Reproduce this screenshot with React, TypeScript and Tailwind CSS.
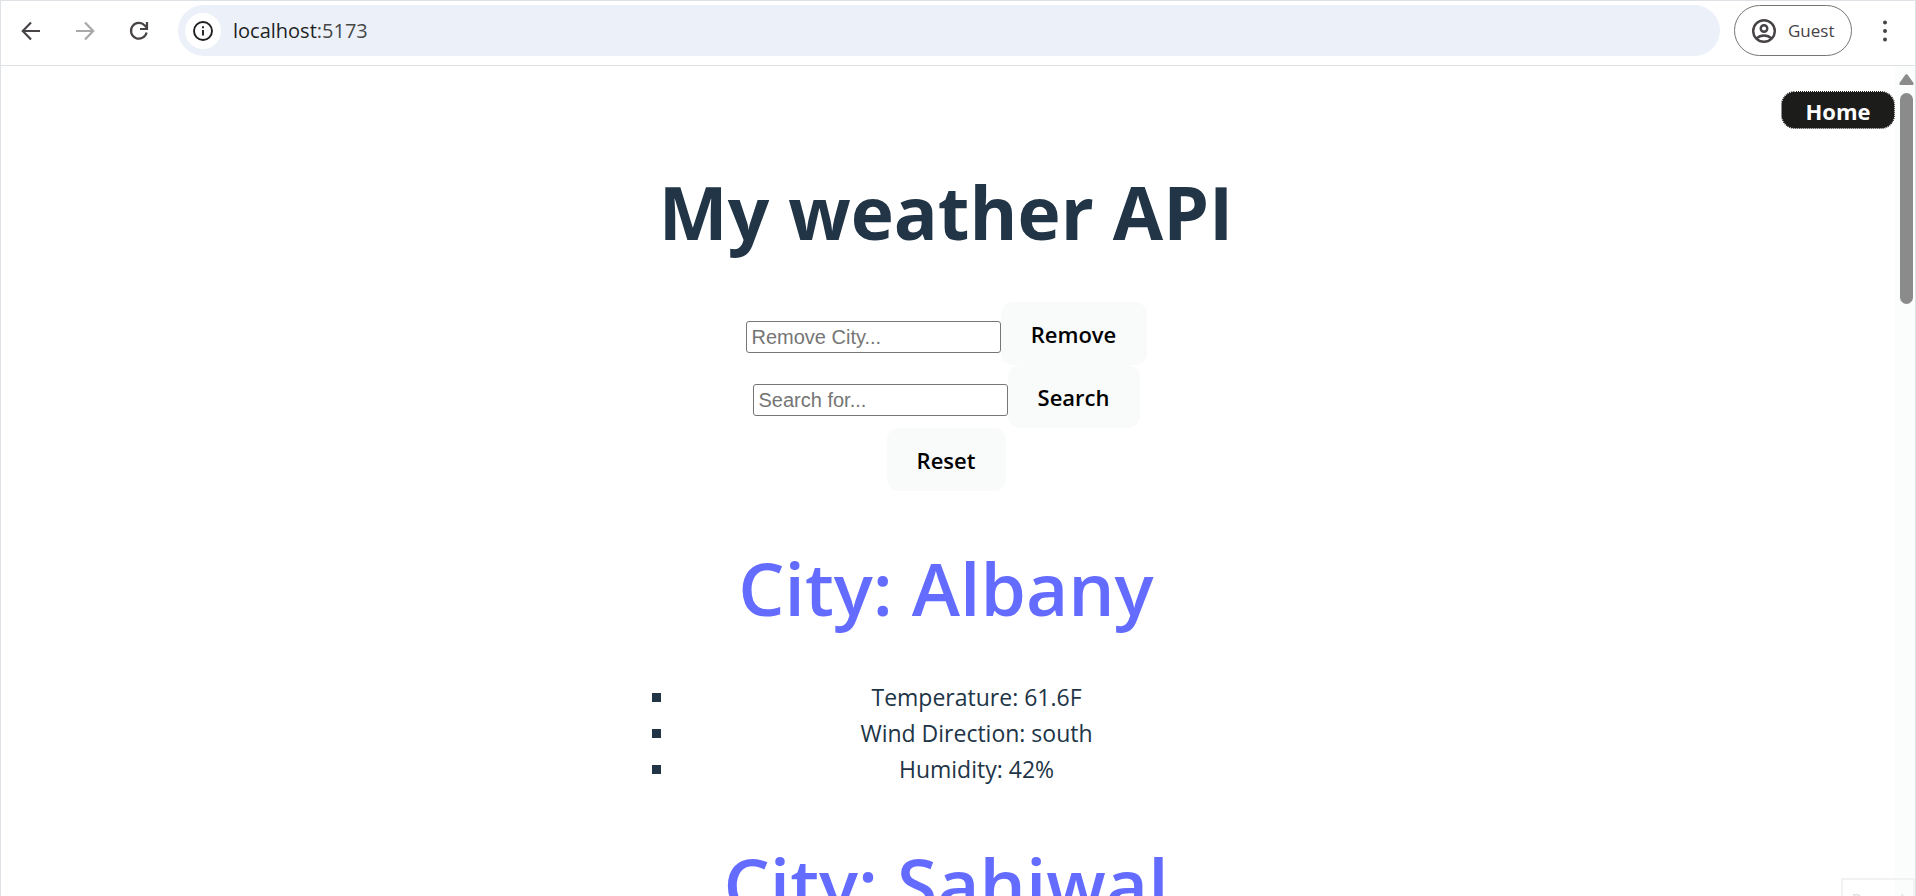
import { useState } from "react";

type City = { name: string; temperature: string; wind: string; humidity: string };

const cities: City[] = [
  { name: "Albany", temperature: "61.6F", wind: "south", humidity: "42%" },
  { name: "Sahiwal", temperature: "88.2F", wind: "north", humidity: "35%" },
];

const actionClass =
  "h-[63px] rounded-xl bg-[#f9fafa] font-['Open_Sans',sans-serif] text-[22px] font-semibold leading-9 text-black";
const inputClass =
  "mb-3 h-8 w-[255px] rounded-[3px] border border-[#767676] bg-white px-[5px] font-['Liberation_Sans',sans-serif] text-[20px] leading-6 text-black placeholder:text-[#757575]";

function BrowserBar() {
  return (
    <header className="flex h-[65px] shrink-0 items-start border-b border-[#dee1e6] bg-white pt-1 pr-[22px] pl-4">
      <nav className="flex h-[51px] items-center gap-[26px]" aria-label="Browser">
        <button type="button" aria-label="Back" className="flex size-7 items-center justify-center">
          <svg viewBox="0 0 20 20" className="size-5" fill="none" stroke="#474347" strokeWidth="2.2">
            <path d="M19 10H2.5M10 1.5 1.8 10l8.2 8.5" />
          </svg>
        </button>
        <button type="button" aria-label="Forward" className="flex size-7 items-center justify-center">
          <svg viewBox="0 0 20 20" className="size-5" fill="none" stroke="#a9a7a9" strokeWidth="2.2">
            <path d="M1 10h16.5M10 1.5 18.2 10 10 18.5" />
          </svg>
        </button>
        <button type="button" aria-label="Reload" className="flex size-7 items-center justify-center">
          <svg viewBox="0 0 20 20" className="size-5" fill="none" stroke="#474347" strokeWidth="2.2">
            <path d="M17.6 11.5A7.9 7.9 0 1 1 15.8 4.5L18 7M18 1v7h-7" />
          </svg>
        </button>
      </nav>
      <div className="ml-[25px] flex h-[51px] min-w-0 flex-1 items-center rounded-full bg-[#ecf1f9] pl-[7px]">
        <button
          type="button"
          aria-label="Site information"
          className="flex size-9 shrink-0 items-center justify-center rounded-full bg-white"
        >
          <svg viewBox="0 0 20 20" className="size-5" fill="none" stroke="#1f1f1f" strokeWidth="1.9">
            <circle cx="10" cy="10" r="9" />
            <path d="M10 9v5.5M10 5.2v2" />
          </svg>
        </button>
        <p className="pl-3 font-['Open_Sans',sans-serif] text-[20px] leading-7 text-[#1f1f1f]">
          localhost<span className="text-[#474747]">:5173</span>
        </p>
      </div>
      <button
        type="button"
        className="ml-[14px] flex h-[51px] w-[118px] shrink-0 items-center gap-3 rounded-full border border-[#757575] pl-[17px] font-['Open_Sans',sans-serif] text-[17px] leading-6 text-[#474347]"
      >
        <svg viewBox="0 0 24 24" className="size-6" fill="none" stroke="#474347" strokeWidth="2.4">
          <circle cx="12" cy="12" r="10.8" />
          <circle cx="12" cy="9.5" r="3.3" />
          <path d="M4.5 19.5c4-4 11-4 15 0" />
        </svg>
        Guest
      </button>
      <button type="button" aria-label="Menu" className="ml-[25px] flex h-[51px] w-4 items-center justify-center">
        <svg viewBox="0 0 4 22" className="h-[22px] w-1" fill="#474347">
          <circle cx="2" cy="2.5" r="2" />
          <circle cx="2" cy="11" r="2" />
          <circle cx="2" cy="19.5" r="2" />
        </svg>
      </button>
    </header>
  );
}

function CityCard({ city }: { city: City }) {
  const facts = [
    `Temperature: ${city.temperature}`,
    `Wind Direction: ${city.wind}`,
    `Humidity: ${city.humidity}`,
  ];
  return (
    <section className="flex flex-col gap-[52px] pt-[58px]">
      <h2 className="text-center text-[73px] font-semibold leading-[78px] text-[#646cff]">City: {city.name}</h2>
      <ul className="pl-9">
        {facts.map((fact) => (
          <li
            key={fact}
            className="flex items-center gap-4 text-[23px] leading-9 before:size-[9px] before:bg-[#213547]"
          >
            <span className="flex-1 text-center">{fact}</span>
          </li>
        ))}
      </ul>
    </section>
  );
}

function ScrollTrack() {
  return (
    <div className="flex w-5 shrink-0 flex-col items-center bg-[#fbfdfc] pt-2 pl-[3px]" aria-hidden="true">
      <svg viewBox="0 0 15 11" className="h-[11px] w-[15px]" fill="#8b8b8b">
        <path d="M6.3.8Q7.5-.5 8.7.8L14.5 9Q15 11 13.5 11h-12Q0 11 .5 9Z" />
      </svg>
      <div className="mt-2 h-[211px] w-[13px] rounded-full bg-[#8b8b8b]" />
    </div>
  );
}

export default function App() {
  const [removeCity, setRemoveCity] = useState("");
  const [search, setSearch] = useState("");
  return (
    <div className="relative flex h-screen flex-col overflow-hidden border-x border-t border-[#dee1e6] bg-white font-['Open_Sans',sans-serif] text-[#213547]">
      <BrowserBar />
      <div className="flex min-h-0 flex-1 overflow-hidden">
        <main className="flex min-w-0 flex-1 flex-col">
          <nav className="flex w-full justify-end pt-[25px]">
            <a
              href="#home"
              className="flex h-[38px] w-[114px] items-center justify-center rounded-[14px] border border-dotted border-white bg-[#1c1c1a] pt-0.5 text-[22px] font-bold leading-8 text-white"
            >
              Home
            </a>
          </nav>
          <div className="flex flex-col items-center pr-1">
            <h1 className="mt-[41px] text-center text-[73px] font-bold leading-[84px]">My weather API</h1>
            <div className="mt-12 flex flex-col items-center">
              <form className="flex items-end" onSubmit={(e) => e.preventDefault()}>
                <input
                  aria-label="Remove City"
                  placeholder="Remove City..."
                  value={removeCity}
                  onChange={(e) => setRemoveCity(e.target.value)}
                  className={inputClass}
                />
                <button type="submit" className={`${actionClass} w-[146px]`}>
                  Remove
                </button>
              </form>
              <form className="flex items-end" onSubmit={(e) => e.preventDefault()}>
                <input
                  aria-label="Search for a city"
                  placeholder="Search for..."
                  value={search}
                  onChange={(e) => setSearch(e.target.value)}
                  className={inputClass}
                />
                <button type="submit" className={`${actionClass} w-[132px]`}>
                  Search
                </button>
              </form>
              <button type="button" className={`${actionClass} w-[119px]`}>
                Reset
              </button>
            </div>
            <div className="w-[660px] max-w-full">
              {cities.map((city) => (
                <CityCard key={city.name} city={city} />
              ))}
            </div>
          </div>
        </main>
        <ScrollTrack />
      </div>
      <div className="absolute right-0 -bottom-5 h-[38px] w-[74px] border-2 border-[#f2f2f2] pt-2 text-center text-[16px] leading-6 text-[#dcdcdc]">
        Record
      </div>
    </div>
  );
}
